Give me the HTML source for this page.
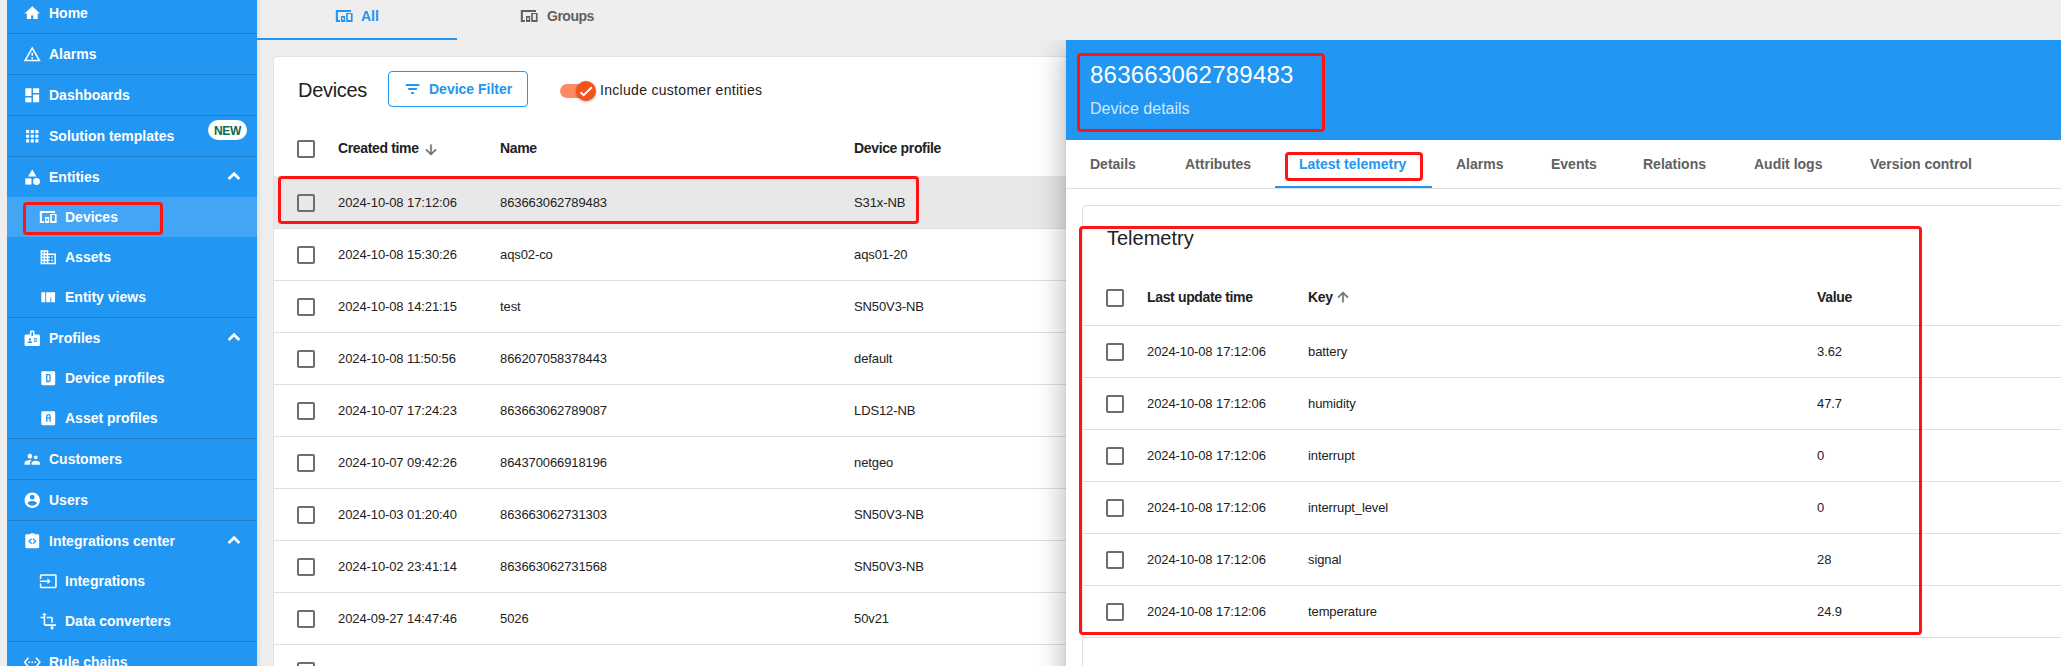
<!DOCTYPE html>
<html><head><meta charset="utf-8">
<style>
*{box-sizing:border-box;margin:0;padding:0}
html,body{width:2061px;height:666px;overflow:hidden;background:#eeeeee;font-family:"Liberation Sans",sans-serif;position:relative}
.abs{position:absolute}
#sb{position:absolute;left:7px;top:0;width:250px;height:666px;background:#2196f3;overflow:hidden}
.it{position:absolute;left:0;width:250px;height:40px;color:#fff;font-weight:bold;font-size:14px;line-height:40px;white-space:nowrap}
.it.b{border-bottom:1px solid #1f7fcf;height:41px}
.it .t{position:absolute;left:42px;top:0}
.it.sub .t{left:58px}
.it svg{position:absolute;fill:#fff}
.it.sel{background:#42a5f5}
.exp{position:absolute;left:215px;top:7px;width:24px;height:24px}
.red{position:absolute;border:3px solid #ff1414;border-radius:4px}
.txt{position:absolute;white-space:nowrap}
.cb{position:absolute;width:18px;height:18px;border:2px solid #6e6e6e;border-radius:2px}
</style></head><body>

<!-- SIDEBAR -->
<div id="sb">
  <div class="it b" style="top:-7px"><svg style="left:15.75px;top:10.75px" width="18.5" height="18.5" viewBox="0 0 24 24"><path d="M12 2.9L2 12.4H5V19.5H10.6V14.85H13.3V19.5H19.1V12.4H22Z"/></svg><span class="t">Home</span></div>
  <div class="it b" style="top:34px"><svg style="left:15.75px;top:10.75px" width="18.5" height="18.5" viewBox="0 0 24 24"><path d="M12 5.99L19.53 19H4.47L12 5.99M12 2L1 21h22L12 2zm1 14h-2v2h2v-2zm0-6h-2v4h2v-4z"/></svg><span class="t">Alarms</span></div>
  <div class="it b" style="top:75px"><svg style="left:15.75px;top:10.75px" width="18.5" height="18.5" viewBox="0 0 24 24"><path d="M3 13h8V3H3v10zm0 8h8v-6H3v6zm10 0h8V11h-8v10zm0-18v6h8V3h-8z"/></svg><span class="t">Dashboards</span></div>
  <div class="it b" style="top:116px"><svg style="left:15.75px;top:10.75px" width="18.5" height="18.5" viewBox="0 0 24 24"><path d="M4 8h4V4H4v4zm6 12h4v-4h-4v4zm-6 0h4v-4H4v4zm0-6h4v-4H4v4zm6 0h4v-4h-4v4zm6-10v4h4V4h-4zm-6 4h4V4h-4v4zm6 6h4v-4h-4v4zm0 6h4v-4h-4v4z"/></svg><span class="t">Solution templates</span>
    <div class="abs" style="left:201px;top:4px;width:39px;height:20px;background:#fff;border-radius:10px;color:#0d6a4a;font-size:12px;line-height:22px;letter-spacing:-0.3px;text-align:center;font-weight:bold">NEW</div></div>
  <div class="it" style="top:157px"><svg style="left:15.75px;top:10.75px" width="18.5" height="18.5" viewBox="0 0 24 24"><path d="M12 2l-5.5 9h11z"/><circle cx="17.5" cy="17.5" r="4.5"/><path d="M3 13.5h8v8H3z"/></svg><span class="t">Entities</span><svg class="exp" viewBox="0 0 24 24"><polyline points="6.6,14.9 12.1,9.7 17.3,14.9" fill="none" stroke="#fff" stroke-width="2.8"/></svg></div>
  <div class="it sub sel" style="top:197px"><svg style="left:32px;top:13px" width="18" height="13" viewBox="0 0 18 13"><path fill-rule="evenodd" d="M0.8 1H16V2.9H2.9V10.9H5V13H0.8Z M6 6.9H10.2V13H6Z M8.1 8.75A1.05 1.05 0 1 0 8.1 10.85A1.05 1.05 0 1 0 8.1 8.75Z M11.2 4H17.6V13H11.2Z M12.9 5V11H15.9V5Z"/></svg><span class="t">Devices</span></div>
  <div class="it sub" style="top:237px"><svg style="left:31.75px;top:10.75px" width="18.5" height="18.5" viewBox="0 0 24 24"><path d="M12 7V3H2v18h20V7H12zM6 19H4v-2h2v2zm0-4H4v-2h2v2zm0-4H4V9h2v2zm0-4H4V5h2v2zm4 12H8v-2h2v2zm0-4H8v-2h2v2zm0-4H8V9h2v2zm0-4H8V5h2v2zm10 12h-8v-2h2v-2h-2v-2h2v-2h-2V9h8v10zm-2-8h-2v2h2v-2zm0 4h-2v2h2v-2z"/></svg><span class="t">Assets</span></div>
  <div class="it sub b" style="top:277px"><svg style="left:31.75px;top:10.75px" width="18.5" height="18.5" viewBox="0 0 24 24"><path d="M3 5.4H8.1V18.4H3Z M9.3 5.4H20.8V18.4H15.9V12H14.7V18.4H9.3Z"/></svg><span class="t">Entity views</span></div>
  <div class="it" style="top:318px"><svg style="left:15.75px;top:10.75px" width="18.5" height="18.5" viewBox="0 0 24 24"><path d="M20 7h-5V4c0-1.1-.9-2-2-2h-2c-1.1 0-2 .9-2 2v3H4c-1.1 0-2 .9-2 2v11c0 1.1.9 2 2 2h16c1.1 0 2-.9 2-2V9c0-1.1-.9-2-2-2zM9 12c.83 0 1.5.67 1.5 1.5S9.830 15 9 15s-1.5-.67-1.5-1.5S8.17 12 9 12zm3 6H6v-.75c0-1 2-1.5 3-1.5s3 .5 3 1.5V18zm1-9h-2V4h2v5zm5 7.5h-4V15h4v1.5zm0-3h-4V12h4v1.5z"/></svg><span class="t">Profiles</span><svg class="exp" viewBox="0 0 24 24"><polyline points="6.6,14.9 12.1,9.7 17.3,14.9" fill="none" stroke="#fff" stroke-width="2.8"/></svg></div>
  <div class="it sub" style="top:358px"><svg style="left:31.75px;top:10.75px" width="18.5" height="18.5" viewBox="0 0 24 24"><rect x="3" y="3" width="18" height="18" rx="1.6"/><path d="M10 7.4H12.6Q14.4 7.4 14.4 9.2V14.4Q14.4 16.2 12.6 16.2H10Z" fill="none" stroke="#2196f3" stroke-width="1.7"/></svg><span class="t">Device profiles</span></div>
  <div class="it sub b" style="top:398px"><svg style="left:31.75px;top:10.75px" width="18.5" height="18.5" viewBox="0 0 24 24"><rect x="3" y="3" width="18" height="18" rx="1.6"/><path d="M10 16.6V9.6Q10 7.4 12.2 7.4Q14.4 7.4 14.4 9.6V16.6M10 11.8H14.4" fill="none" stroke="#2196f3" stroke-width="1.7"/></svg><span class="t">Asset profiles</span></div>
  <div class="it b" style="top:439px"><svg style="left:15.75px;top:10.75px" width="18.5" height="18.5" viewBox="0 0 24 24"><path d="M16.5 12c1.38 0 2.49-1.12 2.49-2.5S17.88 7 16.5 7C15.12 7 14 8.12 14 9.5s1.12 2.5 2.5 2.5zM9 11c1.66 0 2.99-1.34 2.99-3S10.66 5 9 5C7.34 5 6 6.34 6 8s1.34 3 3 3zm7.5 3c-1.83 0-5.5.92-5.5 2.75V19h11v-2.25c0-1.830-3.67-2.75-5.5-2.75zM9 13c-2.33 0-7 1.17-7 3.5V19h7v-2.25c0-.85.33-2.34 2.37-3.47C10.5 13.1 9.66 13 9 13z"/></svg><span class="t">Customers</span></div>
  <div class="it b" style="top:480px"><svg style="left:15.75px;top:10.75px" width="18.5" height="18.5" viewBox="0 0 24 24"><path d="M12 2C6.48 2 2 6.48 2 12s4.48 10 10 10 10-4.48 10-10S17.52 2 12 2zm0 3c1.66 0 3 1.34 3 3s-1.34 3-3 3-3-1.34-3-3 1.34-3 3-3zm0 14.2c-2.5 0-4.71-1.28-6-3.22.03-1.99 4-3.08 6-3.08 1.99 0 5.97 1.09 6 3.08-1.29 1.94-3.5 3.22-6 3.22z"/></svg><span class="t">Users</span></div>
  <div class="it" style="top:521px"><svg style="left:15.75px;top:10.75px" width="18.5" height="18.5" viewBox="0 0 24 24"><rect x="3" y="3" width="18" height="18" rx="1.6"/><rect x="9.4" y="1.6" width="5.6" height="2.4" rx="0.9"/><rect x="11.2" y="3.2" width="1.6" height="0.8" fill="#2196f3" opacity=".5"/><path d="M10.6 9.3L7.6 12L10.6 14.7M13.4 9.3L16.4 12L13.4 14.7" stroke="#2196f3" stroke-width="1.7" fill="none" stroke-linecap="round" stroke-linejoin="round"/></svg><span class="t">Integrations center</span><svg class="exp" viewBox="0 0 24 24"><polyline points="6.6,14.9 12.1,9.7 17.3,14.9" fill="none" stroke="#fff" stroke-width="2.8"/></svg></div>
  <div class="it sub" style="top:561px"><svg style="left:31.75px;top:10.75px" width="18.5" height="18.5" viewBox="0 0 24 24"><path d="M21 3.01H3c-1.1 0-2 .9-2 2V9h2V4.99h18v14.03H3V15H1v4.01c0 1.1.9 1.98 2 1.98h18c1.1 0 2-.88 2-1.98v-14c0-1.11-.9-2-2-2zM11 16l4-4-4-4v3H1v2h10v3z"/></svg><span class="t">Integrations</span></div>
  <div class="it sub b" style="top:601px"><svg style="left:31.75px;top:10.75px" width="18.5" height="18.5" viewBox="0 0 24 24"><path d="M22 18v-2H8V4h2L7 1 4 4h2v2H2v2h4v8c0 1.1.9 2 2 2h8v2h-2l3 3 3-3h-2v-2h4zM10 8h6v6h2V8c0-1.1-.9-2-2-2h-6v2z"/></svg><span class="t">Data converters</span></div>
  <div class="it" style="top:642px"><svg style="left:15.75px;top:10.75px" width="18.5" height="18.5" viewBox="0 0 24 24"><path d="M7.77 6.76L6.23 5.48.82 12l5.41 6.52 1.54-1.28L3.42 12l4.35-5.24zM7 13h2v-2H7v2zm10-2h-2v2h2v-2zm-6 2h2v-2h-2v2zm6.77-7.52l-1.54 1.28L20.58 12l-4.35 5.24 1.54 1.28L23.18 12l-5.41-6.52z"/></svg><span class="t">Rule chains</span></div>
</div>
<div class="red" style="left:23px;top:202px;width:140px;height:33px"></div>

<div class="abs" style="left:257px;top:0;width:6px;height:666px;background:linear-gradient(to right,rgba(0,0,0,.05),rgba(0,0,0,0))"></div>
<!-- TOP TABS -->
<div class="abs" style="left:257px;top:38px;width:200px;height:2px;background:#2196f3"></div>
<svg class="abs" style="left:335px;top:9px" width="18" height="13" viewBox="0 0 18 13" fill="#2196f3"><path fill-rule="evenodd" d="M0.8 1H16V2.9H2.9V10.9H5V13H0.8Z M6 6.9H10.2V13H6Z M8.1 8.75A1.05 1.05 0 1 0 8.1 10.85A1.05 1.05 0 1 0 8.1 8.75Z M11.2 4H17.6V13H11.2Z M12.9 5V11H15.9V5Z"/></svg>
<div class="txt" style="left:361px;top:8px;font-size:14px;font-weight:bold;color:#2196f3">All</div>
<svg class="abs" style="left:520px;top:9px" width="18" height="13" viewBox="0 0 18 13" fill="#616161"><path fill-rule="evenodd" d="M0.8 1H16V2.9H2.9V10.9H5V13H0.8Z M6 6.9H10.2V13H6Z M8.1 8.75A1.05 1.05 0 1 0 8.1 10.85A1.05 1.05 0 1 0 8.1 8.75Z M11.2 4H17.6V13H11.2Z M12.9 5V11H15.9V5Z"/></svg>
<div class="txt" style="left:547px;top:8px;font-size:14px;font-weight:bold;letter-spacing:-0.5px;color:#616161">Groups</div>

<!-- DEVICES CARD -->
<div class="abs" style="left:273px;top:56px;width:900px;height:700px;background:#fff;border-radius:4px;border:1px solid #e2e2e2" id="card"></div>
<div class="txt" style="left:298px;top:79px;font-size:20px;letter-spacing:-0.3px;color:#212121">Devices</div>
<div class="abs" style="left:388px;top:71px;width:140px;height:36px;border:1px solid #2196f3;border-radius:4px"></div>
<svg class="abs" style="left:400px;top:78px" width="25" height="22" viewBox="0 0 25 22" fill="#2196f3"><rect x="5.6" y="5.9" width="13.9" height="2" rx=".9"/><rect x="7.9" y="10.1" width="9.3" height="1.9" rx=".9"/><rect x="10.9" y="14" width="3.3" height="2" rx=".9"/></svg>
<div class="txt" style="left:429px;top:81px;font-size:14px;font-weight:bold;color:#2196f3">Device Filter</div>
<div class="abs" style="left:560px;top:84px;width:34px;height:14px;border-radius:7px;background:#ff8a65"></div>
<div class="abs" style="left:576px;top:81px;width:20px;height:20px;border-radius:10px;background:#f4511e;box-shadow:0 1px 3px rgba(0,0,0,.3)"></div>
<svg class="abs" style="left:576px;top:81px" width="20" height="20" viewBox="0 0 20 20"><polyline points="4.6,11.2 7.7,14.2 15.8,6.2" fill="none" stroke="#fff" stroke-width="2"/></svg>
<div class="txt" style="left:600px;top:82px;font-size:14px;letter-spacing:0.3px;color:#212121">Include customer entities</div>
<div class="cb" style="left:297px;top:140px"></div>
<div class="txt" style="left:338px;top:140px;font-size:14px;font-weight:bold;letter-spacing:-0.35px;color:#212121">Created time</div>
<svg class="abs" style="left:423px;top:142px" width="16" height="16" viewBox="0 0 24 24" fill="#666" stroke="#666" stroke-width="0.5"><path d="M20 12l-1.41-1.41L13 16.17V4h-2v12.17l-5.58-5.59L4 12l8 8 8-8z"/></svg>
<div class="txt" style="left:500px;top:140px;font-size:14px;font-weight:bold;letter-spacing:-0.35px;color:#212121">Name</div>
<div class="txt" style="left:854px;top:140px;font-size:14px;font-weight:bold;letter-spacing:-0.35px;color:#212121">Device profile</div>
<div class="abs" style="left:274px;top:176px;width:800px;height:1px;background:#e0e0e0"></div>
<div class="abs" style="left:274px;top:176px;width:800px;height:52px;background:#e8e8e8"></div>
<div class="abs" style="left:274px;top:228px;width:800px;height:1px;background:#e0e0e0"></div>
<div class="cb" style="left:297px;top:194px"></div>
<div class="txt" style="left:338px;top:195px;font-size:13px;letter-spacing:-0.1px;color:#212121">2024-10-08 17:12:06</div>
<div class="txt" style="left:500px;top:195px;font-size:13px;letter-spacing:-0.1px;color:#212121">863663062789483</div>
<div class="txt" style="left:854px;top:195px;font-size:13px;letter-spacing:-0.1px;color:#212121">S31x-NB</div>
<div class="abs" style="left:274px;top:280px;width:800px;height:1px;background:#e0e0e0"></div>
<div class="cb" style="left:297px;top:246px"></div>
<div class="txt" style="left:338px;top:247px;font-size:13px;letter-spacing:-0.1px;color:#212121">2024-10-08 15:30:26</div>
<div class="txt" style="left:500px;top:247px;font-size:13px;letter-spacing:-0.1px;color:#212121">aqs02-co</div>
<div class="txt" style="left:854px;top:247px;font-size:13px;letter-spacing:-0.1px;color:#212121">aqs01-20</div>
<div class="abs" style="left:274px;top:332px;width:800px;height:1px;background:#e0e0e0"></div>
<div class="cb" style="left:297px;top:298px"></div>
<div class="txt" style="left:338px;top:299px;font-size:13px;letter-spacing:-0.1px;color:#212121">2024-10-08 14:21:15</div>
<div class="txt" style="left:500px;top:299px;font-size:13px;letter-spacing:-0.1px;color:#212121">test</div>
<div class="txt" style="left:854px;top:299px;font-size:13px;letter-spacing:-0.1px;color:#212121">SN50V3-NB</div>
<div class="abs" style="left:274px;top:384px;width:800px;height:1px;background:#e0e0e0"></div>
<div class="cb" style="left:297px;top:350px"></div>
<div class="txt" style="left:338px;top:351px;font-size:13px;letter-spacing:-0.1px;color:#212121">2024-10-08 11:50:56</div>
<div class="txt" style="left:500px;top:351px;font-size:13px;letter-spacing:-0.1px;color:#212121">866207058378443</div>
<div class="txt" style="left:854px;top:351px;font-size:13px;letter-spacing:-0.1px;color:#212121">default</div>
<div class="abs" style="left:274px;top:436px;width:800px;height:1px;background:#e0e0e0"></div>
<div class="cb" style="left:297px;top:402px"></div>
<div class="txt" style="left:338px;top:403px;font-size:13px;letter-spacing:-0.1px;color:#212121">2024-10-07 17:24:23</div>
<div class="txt" style="left:500px;top:403px;font-size:13px;letter-spacing:-0.1px;color:#212121">863663062789087</div>
<div class="txt" style="left:854px;top:403px;font-size:13px;letter-spacing:-0.1px;color:#212121">LDS12-NB</div>
<div class="abs" style="left:274px;top:488px;width:800px;height:1px;background:#e0e0e0"></div>
<div class="cb" style="left:297px;top:454px"></div>
<div class="txt" style="left:338px;top:455px;font-size:13px;letter-spacing:-0.1px;color:#212121">2024-10-07 09:42:26</div>
<div class="txt" style="left:500px;top:455px;font-size:13px;letter-spacing:-0.1px;color:#212121">864370066918196</div>
<div class="txt" style="left:854px;top:455px;font-size:13px;letter-spacing:-0.1px;color:#212121">netgeo</div>
<div class="abs" style="left:274px;top:540px;width:800px;height:1px;background:#e0e0e0"></div>
<div class="cb" style="left:297px;top:506px"></div>
<div class="txt" style="left:338px;top:507px;font-size:13px;letter-spacing:-0.1px;color:#212121">2024-10-03 01:20:40</div>
<div class="txt" style="left:500px;top:507px;font-size:13px;letter-spacing:-0.1px;color:#212121">863663062731303</div>
<div class="txt" style="left:854px;top:507px;font-size:13px;letter-spacing:-0.1px;color:#212121">SN50V3-NB</div>
<div class="abs" style="left:274px;top:592px;width:800px;height:1px;background:#e0e0e0"></div>
<div class="cb" style="left:297px;top:558px"></div>
<div class="txt" style="left:338px;top:559px;font-size:13px;letter-spacing:-0.1px;color:#212121">2024-10-02 23:41:14</div>
<div class="txt" style="left:500px;top:559px;font-size:13px;letter-spacing:-0.1px;color:#212121">863663062731568</div>
<div class="txt" style="left:854px;top:559px;font-size:13px;letter-spacing:-0.1px;color:#212121">SN50V3-NB</div>
<div class="abs" style="left:274px;top:644px;width:800px;height:1px;background:#e0e0e0"></div>
<div class="cb" style="left:297px;top:610px"></div>
<div class="txt" style="left:338px;top:611px;font-size:13px;letter-spacing:-0.1px;color:#212121">2024-09-27 14:47:46</div>
<div class="txt" style="left:500px;top:611px;font-size:13px;letter-spacing:-0.1px;color:#212121">5026</div>
<div class="txt" style="left:854px;top:611px;font-size:13px;letter-spacing:-0.1px;color:#212121">50v21</div>
<div class="abs" style="left:274px;top:696px;width:800px;height:1px;background:#e0e0e0"></div>
<div class="cb" style="left:297px;top:662px"></div>
<div class="red" style="left:278px;top:176px;width:641px;height:48px"></div>

<!-- DETAILS PANEL -->
<div class="abs" style="left:900px;top:40px;width:1161px;height:626px;overflow:hidden"><div class="abs" style="left:166px;top:0;width:1100px;height:800px;background:#fff;box-shadow:0 8px 10px -5px rgba(0,0,0,.2),0 16px 24px 2px rgba(0,0,0,.14),0 6px 30px 5px rgba(0,0,0,.12)"></div></div>
<div class="abs" style="left:1066px;top:40px;width:995px;height:100px;background:#2196f3"></div>
<div class="txt" style="left:1090px;top:61px;font-size:24px;letter-spacing:0.23px;color:#fff">863663062789483</div>
<div class="txt" style="left:1090px;top:100px;font-size:16px;color:rgba(255,255,255,.8)">Device details</div>
<div class="red" style="left:1077px;top:53px;width:248px;height:79px"></div>
<div class="txt" style="left:1090px;top:156px;font-size:14px;font-weight:bold;color:#616161">Details</div>
<div class="txt" style="left:1185px;top:156px;font-size:14px;font-weight:bold;color:#616161">Attributes</div>
<div class="txt" style="left:1299px;top:156px;font-size:14px;font-weight:bold;color:#2196f3">Latest telemetry</div>
<div class="txt" style="left:1456px;top:156px;font-size:14px;font-weight:bold;color:#616161">Alarms</div>
<div class="txt" style="left:1551px;top:156px;font-size:14px;font-weight:bold;color:#616161">Events</div>
<div class="txt" style="left:1643px;top:156px;font-size:14px;font-weight:bold;color:#616161">Relations</div>
<div class="txt" style="left:1754px;top:156px;font-size:14px;font-weight:bold;color:#616161">Audit logs</div>
<div class="txt" style="left:1870px;top:156px;font-size:14px;font-weight:bold;color:#616161">Version control</div>
<div class="abs" style="left:1066px;top:188px;width:995px;height:1px;background:#e0e0e0"></div>
<div class="abs" style="left:1275px;top:186px;width:157px;height:2px;background:#2196f3"></div>
<div class="red" style="left:1285px;top:152px;width:138px;height:29px"></div>
<div class="abs" style="left:1082px;top:205px;width:1000px;height:500px;border:1px solid #e0e0e0;border-radius:4px"></div>
<div class="txt" style="left:1107px;top:227px;font-size:20px;color:#212121">Telemetry</div>
<div class="cb" style="left:1106px;top:289px"></div>
<div class="txt" style="left:1147px;top:289px;font-size:14px;font-weight:bold;letter-spacing:-0.35px;color:#212121">Last update time</div>
<div class="txt" style="left:1308px;top:289px;font-size:14px;font-weight:bold;letter-spacing:-0.35px;color:#212121">Key</div>
<svg class="abs" style="left:1335px;top:289px" width="16" height="16" viewBox="0 0 24 24" fill="#666" stroke="#666" stroke-width="0.5"><path d="M4 12l1.41 1.41L11 7.83V20h2V7.83l5.58 5.59L20 12l-8-8-8 8z"/></svg>
<div class="txt" style="left:1817px;top:289px;font-size:14px;font-weight:bold;letter-spacing:-0.35px;color:#212121">Value</div>
<div class="abs" style="left:1083px;top:325px;width:978px;height:1px;background:#e0e0e0"></div>
<div class="abs" style="left:1083px;top:377px;width:978px;height:1px;background:#e0e0e0"></div>
<div class="cb" style="left:1106px;top:343px"></div>
<div class="txt" style="left:1147px;top:344px;font-size:13px;letter-spacing:-0.1px;color:#212121">2024-10-08 17:12:06</div>
<div class="txt" style="left:1308px;top:344px;font-size:13px;letter-spacing:-0.1px;color:#212121">battery</div>
<div class="txt" style="left:1817px;top:344px;font-size:13px;letter-spacing:-0.1px;color:#212121">3.62</div>
<div class="abs" style="left:1083px;top:429px;width:978px;height:1px;background:#e0e0e0"></div>
<div class="cb" style="left:1106px;top:395px"></div>
<div class="txt" style="left:1147px;top:396px;font-size:13px;letter-spacing:-0.1px;color:#212121">2024-10-08 17:12:06</div>
<div class="txt" style="left:1308px;top:396px;font-size:13px;letter-spacing:-0.1px;color:#212121">humidity</div>
<div class="txt" style="left:1817px;top:396px;font-size:13px;letter-spacing:-0.1px;color:#212121">47.7</div>
<div class="abs" style="left:1083px;top:481px;width:978px;height:1px;background:#e0e0e0"></div>
<div class="cb" style="left:1106px;top:447px"></div>
<div class="txt" style="left:1147px;top:448px;font-size:13px;letter-spacing:-0.1px;color:#212121">2024-10-08 17:12:06</div>
<div class="txt" style="left:1308px;top:448px;font-size:13px;letter-spacing:-0.1px;color:#212121">interrupt</div>
<div class="txt" style="left:1817px;top:448px;font-size:13px;letter-spacing:-0.1px;color:#212121">0</div>
<div class="abs" style="left:1083px;top:533px;width:978px;height:1px;background:#e0e0e0"></div>
<div class="cb" style="left:1106px;top:499px"></div>
<div class="txt" style="left:1147px;top:500px;font-size:13px;letter-spacing:-0.1px;color:#212121">2024-10-08 17:12:06</div>
<div class="txt" style="left:1308px;top:500px;font-size:13px;letter-spacing:-0.1px;color:#212121">interrupt_level</div>
<div class="txt" style="left:1817px;top:500px;font-size:13px;letter-spacing:-0.1px;color:#212121">0</div>
<div class="abs" style="left:1083px;top:585px;width:978px;height:1px;background:#e0e0e0"></div>
<div class="cb" style="left:1106px;top:551px"></div>
<div class="txt" style="left:1147px;top:552px;font-size:13px;letter-spacing:-0.1px;color:#212121">2024-10-08 17:12:06</div>
<div class="txt" style="left:1308px;top:552px;font-size:13px;letter-spacing:-0.1px;color:#212121">signal</div>
<div class="txt" style="left:1817px;top:552px;font-size:13px;letter-spacing:-0.1px;color:#212121">28</div>
<div class="abs" style="left:1083px;top:637px;width:978px;height:1px;background:#e0e0e0"></div>
<div class="cb" style="left:1106px;top:603px"></div>
<div class="txt" style="left:1147px;top:604px;font-size:13px;letter-spacing:-0.1px;color:#212121">2024-10-08 17:12:06</div>
<div class="txt" style="left:1308px;top:604px;font-size:13px;letter-spacing:-0.1px;color:#212121">temperature</div>
<div class="txt" style="left:1817px;top:604px;font-size:13px;letter-spacing:-0.1px;color:#212121">24.9</div>
<div class="red" style="left:1079px;top:226px;width:843px;height:409px"></div>

</body></html>
